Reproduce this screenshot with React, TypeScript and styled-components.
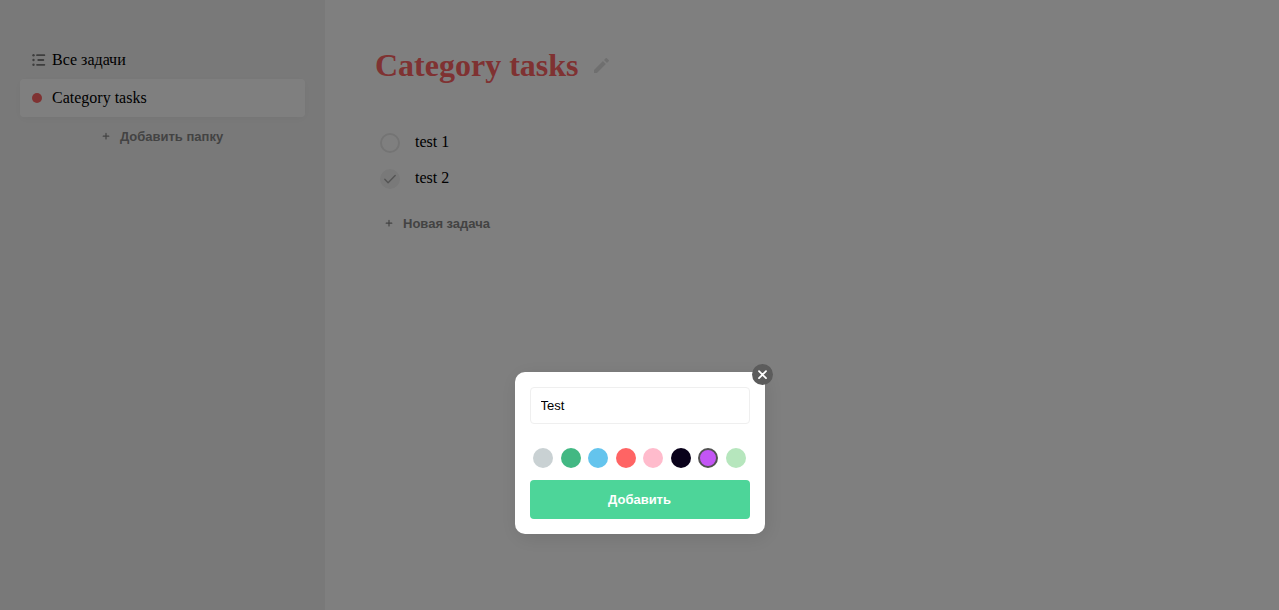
import React, { useState } from "react";
import styled, { createGlobalStyle } from "styled-components";

const GlobalStyle = createGlobalStyle`
  *, *::before, *::after { box-sizing: border-box; }
  body {
    margin: 0;
    background: #fff;
    color: #000;
    font-family: "Liberation Serif", "Times New Roman", serif;
    font-size: 16px;
  }
  button, input { font-family: "Liberation Sans", Arial, sans-serif; }
`;

const Page = styled.div`
  display: flex;
  min-height: 100vh;
`;

const Sidebar = styled.nav`
  flex: 0 0 325px;
  padding: 41px 20px;
  background: #f3f3f3;
`;

const FolderList = styled.ul`
  margin: 0;
  padding: 0;
  list-style: none;
`;

const FolderLink = styled.a<{ $active?: boolean }>`
  display: flex;
  align-items: center;
  height: 38px;
  padding: 0 12px;
  gap: 6px;
  border-radius: 4px;
  color: #000;
  text-decoration: none;
  background: ${(p) => (p.$active ? "#fff" : "transparent")};
  box-shadow: ${(p) => (p.$active ? "0 2px 10px rgba(0, 0, 0, 0.04)" : "none")};
`;

const FolderIcon = styled.span`
  display: flex;
  width: 14px;
`;

const Dot = styled.span<{ $color: string }>`
  width: 10px;
  height: 10px;
  border-radius: 50%;
  background: ${(p) => p.$color};
`;

const AddButton = styled.button<{ $centered?: boolean }>`
  display: flex;
  align-items: center;
  justify-content: center;
  gap: 10px;
  width: ${(p) => (p.$centered ? "100%" : "auto")};
  height: 38px;
  padding: 0 ${(p) => (p.$centered ? 0 : 10)}px;
  border: 0;
  background: none;
  color: #868686;
  font-size: 13px;
  font-weight: 700;
  cursor: pointer;
`;

const Main = styled.main`
  flex: 1;
  min-width: 0;
  padding: 46px 50px;
`;

const TitleRow = styled.header`
  display: flex;
  align-items: center;
  gap: 15px;
`;

const Title = styled.h1`
  margin: 0;
  color: #ff6464;
  font-size: 32px;
  line-height: 38px;
`;

const IconButton = styled.button`
  display: flex;
  padding: 0;
  border: 0;
  background: none;
  cursor: pointer;
`;

const TaskList = styled.ul`
  margin: 48px 0 0;
  padding: 0 5px;
  list-style: none;
`;

const Task = styled.li`
  height: 36px;
`;

const TaskLabel = styled.label`
  display: flex;
  gap: 15px;
  line-height: 20px;
  cursor: pointer;
`;

const TaskCheck = styled.span`
  display: grid;
  margin-top: 1px;
  > * { grid-area: 1 / 1; }
  svg { pointer-events: none; visibility: hidden; place-self: center; }
  input:checked + svg { visibility: visible; }
`;

const TaskCheckbox = styled.input`
  appearance: none;
  width: 20px;
  height: 20px;
  margin: 0;
  border: 2px solid #e8e8e8;
  border-radius: 50%;
  cursor: pointer;
  &:checked { background: #f2f2f2; border-color: #f2f2f2; }
`;

const Overlay = styled.div`
  position: fixed;
  inset: 0;
  display: flex;
  align-items: flex-end;
  justify-content: center;
  padding-bottom: 76px;
  background: rgba(0, 0, 0, 0.5);
`;

const Dialog = styled.form`
  position: relative;
  width: 250px;
  padding: 15px;
  border-radius: 10px;
  background: #fff;
  box-shadow: 2px 4px 20px rgba(0, 0, 0, 0.1);
`;

const CloseButton = styled.button`
  position: absolute;
  top: -8px;
  right: -8px;
  display: flex;
  align-items: center;
  justify-content: center;
  width: 21px;
  height: 21px;
  padding: 0;
  border: 0;
  border-radius: 50%;
  background: #5c5c5c;
  cursor: pointer;
`;

const NameInput = styled.input`
  display: block;
  width: 100%;
  height: 37px;
  padding: 0 10px;
  border: 1px solid #efefef;
  border-radius: 4px;
  outline: 0;
  color: #000;
  font-size: 13px;
`;

const Swatches = styled.div`
  display: flex;
  justify-content: space-around;
  margin: 24px 0 12px;
`;

const Swatch = styled.input<{ $color: string }>`
  appearance: none;
  width: 20px;
  height: 20px;
  margin: 0;
  border-radius: 50%;
  background: ${(p) => p.$color};
  cursor: pointer;
  &:checked { border: 2px solid #525252; }
`;

const SubmitButton = styled.button`
  width: 100%;
  height: 39px;
  border: 0;
  border-radius: 4px;
  background: #4dd599;
  color: #fff;
  font-size: 13px;
  font-weight: 700;
  cursor: pointer;
`;

const COLORS = [
  { name: "grey", hex: "#c9d1d3" },
  { name: "green", hex: "#42b883" },
  { name: "blue", hex: "#64c4ed" },
  { name: "red", hex: "#ff6464" },
  { name: "pink", hex: "#ffbbcc" },
  { name: "black", hex: "#09011a" },
  { name: "purple", hex: "#c355f5" },
  { name: "lime", hex: "#b6e6bd" },
];

const ListIcon = () => (
  <svg width="14" height="12" viewBox="0 0 14 12" fill="#7c7c7c" aria-hidden="true">
    <circle cx="1.5" cy="1.2" r="1.2" />
    <circle cx="1.5" cy="6" r="1.2" />
    <circle cx="1.5" cy="10.8" r="1.2" />
    <rect x="4.2" y="0.2" width="9" height="1.9" rx="0.7" />
    <rect x="5.4" y="5" width="6.8" height="1.9" rx="0.7" />
    <rect x="4.2" y="9.900" width="9" height="1.9" rx="0.7" />
  </svg>
);

const PlusIcon = () => (
  <svg width="8" height="8" viewBox="0 0 8 8" fill="none" stroke="#868686" strokeWidth="1.2" aria-hidden="true">
    <path d="M4 1.400v5.600M1.200 4.200h5.600" strokeLinecap="round" />
  </svg>
);

const PencilIcon = () => (
  <svg width="15" height="15" viewBox="0 0 15 15" fill="#dfdfdf" aria-hidden="true">
    <path d="M0 12v3h3l8.9-8.9-3-3L0 12zM14.7 3.3c.4-.4.4-.8 0-1.2L12.9.3c-.4-.4-.8-.4-1.2 0L10 2l3 3 1.700-1.700z" />
  </svg>
);

const CheckIcon = () => (
  <svg width="14" height="10" viewBox="0 0 14 10" fill="none" stroke="#a8a8a8" strokeWidth="1.4" aria-hidden="true">
    <path d="M1.800 5.200l3.300 3.500L12.200 1.400" strokeLinecap="round" strokeLinejoin="round" />
  </svg>
);

const CloseIcon = () => (
  <svg width="9" height="9" viewBox="0 0 9 9" stroke="#fff" strokeWidth="1.800" aria-hidden="true">
    <path d="M1 1.200l7 7M8 1.200L1 8.200" strokeLinecap="round" />
  </svg>
);

export default function App() {
  const [name, setName] = useState("Test");
  const [color, setColor] = useState("purple");

  return (
    <>
      <GlobalStyle />
      <Page>
        <Sidebar>
          <FolderList>
            <li>
              <FolderLink href="#all">
                <FolderIcon><ListIcon /></FolderIcon>
                Все задачи
              </FolderLink>
            </li>
            <li>
              <FolderLink href="#category" $active>
                <FolderIcon><Dot $color="#ff6464" /></FolderIcon>
                Category tasks
              </FolderLink>
            </li>
          </FolderList>
          <AddButton type="button" $centered><PlusIcon />Добавить папку</AddButton>
        </Sidebar>
        <Main>
          <TitleRow>
            <Title>Category tasks</Title>
            <IconButton type="button" aria-label="Изменить название"><PencilIcon /></IconButton>
          </TitleRow>
          <TaskList>
            {["test 1", "test 2"].map((task, i) => (
              <Task key={task}>
                <TaskLabel>
                  <TaskCheck>
                    <TaskCheckbox type="checkbox" defaultChecked={i === 1} />
                    <CheckIcon />
                  </TaskCheck>
                  {task}
                </TaskLabel>
              </Task>
            ))}
          </TaskList>
          <AddButton type="button"><PlusIcon />Новая задача</AddButton>
        </Main>
      </Page>
      <Overlay>
        <Dialog onSubmit={(e) => e.preventDefault()}>
          <CloseButton type="button" aria-label="Закрыть"><CloseIcon /></CloseButton>
          <NameInput
            type="text"
            aria-label="Название папки"
            value={name}
            onChange={(e) => setName(e.target.value)}
          />
          <Swatches role="radiogroup" aria-label="Цвет папки">
            {COLORS.map((c) => (
              <Swatch
                key={c.name}
                type="radio"
                name="color"
                aria-label={c.name}
                $color={c.hex}
                checked={color === c.name}
                onChange={() => setColor(c.name)}
              />
            ))}
          </Swatches>
          <SubmitButton type="submit">Добавить</SubmitButton>
        </Dialog>
      </Overlay>
    </>
  );
}
